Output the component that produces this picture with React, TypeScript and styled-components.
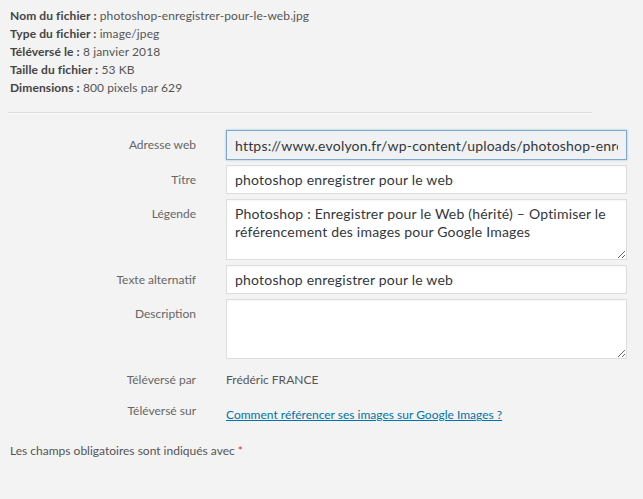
import React from "react";
import styled, { createGlobalStyle } from "styled-components";

const Global = createGlobalStyle`
  html, body { margin: 0; padding: 0; background: #f3f3f3; }
  body { font-family: Lato, "Noto Sans", sans-serif; color: #444; }
`;

const Page = styled.div`
  width: 643px;
  height: 499px;
  background: #f3f3f3;
  overflow: hidden;
`;

const Details = styled.div`
  padding: 7px 0 0 10px;
  font-size: 12px;
  line-height: 18px;
  color: #555;
  letter-spacing: 0.1px;
`;

const DetailLine = styled.div`
  white-space: nowrap;
`;

const Strong = styled.strong`
  font-weight: 700;
  color: #444;
`;

const Separator = styled.div`
  margin: 15px 51px 0 8px;
  height: 1px;
  background: #dddddd;
  box-shadow: 0 1px 0 #fafafa;
`;

const Settings = styled.div`
  display: flex;
  flex-direction: column;
  gap: 5px;
  padding-top: 17px;
`;

const Row = styled.label`
  display: grid;
  grid-template-columns: 196px 401px;
  column-gap: 30px;
  align-items: start;
`;

const Label = styled.span`
  text-align: right;
  font-size: 12px;
  line-height: 16px;
  color: #666;
  padding-top: 7px;
`;

const fieldCss = `
  box-sizing: border-box;
  width: 401px;
  margin: 0;
  padding: 5px 8px;
  font-family: Lato, "Noto Sans", sans-serif;
  font-size: 14px;
  line-height: 18px;
  letter-spacing: 0.2px;
  color: #32373c;
  border-radius: 0;
  outline: none;
`;

const Input = styled.input<{ $readonly?: boolean; $h: number }>`
  ${fieldCss}
  height: ${(p) => p.$h}px;
  background: ${(p) => (p.$readonly ? "#f0f1f3" : "#ffffff")};
  border: 1px solid ${(p) => (p.$readonly ? "#7fa8cc" : "#dddddd")};
  box-shadow: ${(p) =>
    p.$readonly ? "0 0 2px rgba(30, 140, 190, 0.5)" : "inset 0 1px 2px rgba(0,0,0,0.04)"};
`;

const TextArea = styled.textarea<{ $h: number }>`
  ${fieldCss}
  display: block;
  height: ${(p) => p.$h}px;
  background: #ffffff;
  border: 1px solid #dddddd;
  box-shadow: inset 0 1px 2px rgba(0,0,0,0.04);
  resize: vertical;
  overflow: hidden;
`;

const InfoRow = styled.div`
  display: grid;
  grid-template-columns: 196px auto;
  column-gap: 30px;
`;

const InfoLabel = styled.span`
  text-align: right;
  font-size: 12px;
  line-height: 16px;
  color: #666;
`;

const Value = styled.span`
  font-size: 12px;
  line-height: 16px;
  color: #555;
`;

const Link = styled.a`
  font-size: 12px;
  line-height: 16px;
  color: #0073aa;
  text-decoration: underline;
`;

const Infos = styled.div`
  display: flex;
  flex-direction: column;
  gap: 15px;
  padding-top: 13px;
`;

const Required = styled.p`
  margin: 0;
  padding: 20px 0 0 10px;
  font-size: 12px;
  line-height: 16px;
  color: #555;
`;

const Star = styled.span`
  color: #dc3232;
`;

export default function App() {
  return (
    <Page>
      <Global />
      <Details>
        <DetailLine>
          <Strong>Nom du fichier :</Strong> photoshop-enregistrer-pour-le-web.jpg
        </DetailLine>
        <DetailLine>
          <Strong>Type du fichier :</Strong> image/jpeg
        </DetailLine>
        <DetailLine>
          <Strong>Téléversé le :</Strong> 8 janvier 2018
        </DetailLine>
        <DetailLine>
          <Strong>Taille du fichier :</Strong> 53 KB
        </DetailLine>
        <DetailLine>
          <Strong>Dimensions :</Strong> 800 pixels par 629
        </DetailLine>
      </Details>
      <Separator />
      <Settings>
        <Row>
          <Label>Adresse web</Label>
          <Input
            $readonly
            $h={30}
            readOnly
            value="https://www.evolyon.fr/wp-content/uploads/photoshop-enregistrer-pour-le-web.jpg"
          />
        </Row>
        <Row>
          <Label>Titre</Label>
          <Input $h={29} readOnly value="photoshop enregistrer pour le web" />
        </Row>
        <Row>
          <Label>Légende</Label>
          <TextArea
            $h={61}
            readOnly
            value="Photoshop : Enregistrer pour le Web (hérité) – Optimiser le référencement des images pour Google Images"
          />
        </Row>
        <Row>
          <Label>Texte alternatif</Label>
          <Input $h={29} readOnly value="photoshop enregistrer pour le web" />
        </Row>
        <Row>
          <Label>Description</Label>
          <TextArea $h={60} readOnly value="" />
        </Row>
      </Settings>
      <Infos>
        <InfoRow>
          <InfoLabel>Téléversé par</InfoLabel>
          <Value>Frédéric FRANCE</Value>
        </InfoRow>
        <InfoRow>
          <InfoLabel>Téléversé sur</InfoLabel>
          <div>
            <Link href="#">Comment référencer ses images sur Google Images ?</Link>
          </div>
        </InfoRow>
      </Infos>
      <Required>
        Les champs obligatoires sont indiqués avec <Star>*</Star>
      </Required>
    </Page>
  );
}
